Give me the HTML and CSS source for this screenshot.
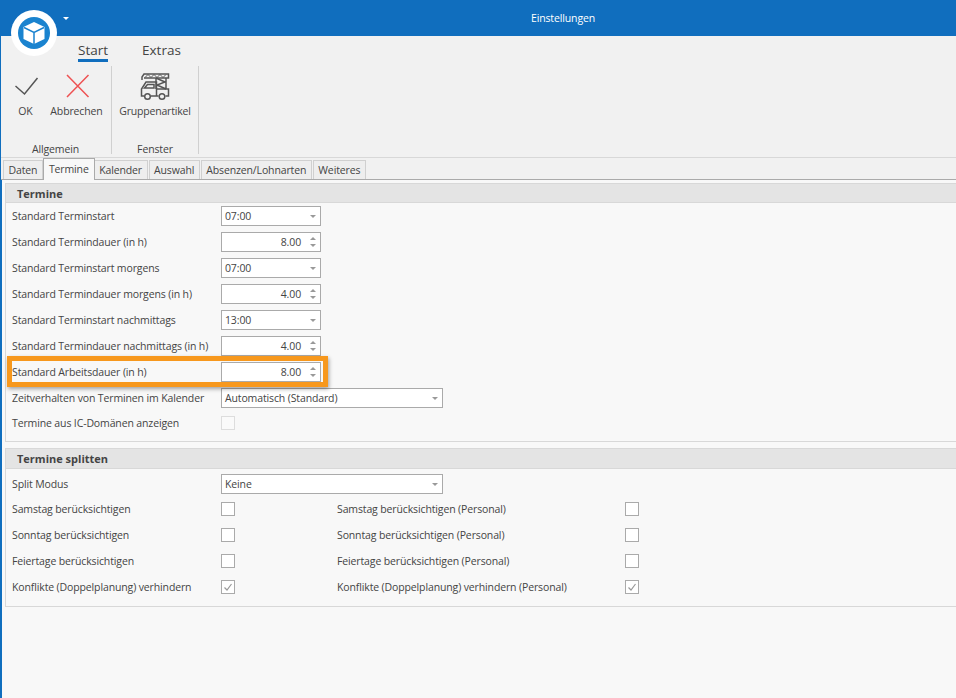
FILE: index.html
```html
<!DOCTYPE html>
<html lang="de">
<head>
    <meta charset="UTF-8">
    <title>Einstellungen</title>
    <link rel="stylesheet" href="styles.css">
</head>
<body>
    <div class="window">
        <div class="titlebar">
            <span class="title">Einstellungen</span>
        </div>
        <div class="logo">
            <svg width="34" height="34" viewBox="0 0 34 34">
                <circle cx="17" cy="17" r="16" fill="#1a83cf"/>
                <path d="M17 6 L27.5 11 V23 L17 28 L6.5 23 V11 Z" fill="#fff"/>
                <path d="M7 11.5 L17 16.5 L27 11.5 M17 16.5 V28" fill="none" stroke="#1a83cf" stroke-width="1.5"/>
            </svg>
        </div>
        <div class="qat-arrow"></div>

        <div class="ribbon">
            <div class="ribbon-tabs">
                <span class="ribbon-tab active">Start</span>
                <span class="ribbon-tab">Extras</span>
            </div>
            <div class="ribbon-groups">
                <div class="group group-allgemein">
                    <div class="group-items">
                        <div class="rbtn rbtn-ok">
                            <svg width="30" height="30" viewBox="0 0 30 30"><path d="M4.5 14 L13.5 22 L26.5 6" fill="none" stroke="#555" stroke-width="1.5"/></svg>
                            <span>OK</span>
                        </div>
                        <div class="rbtn rbtn-cancel">
                            <svg width="30" height="30" viewBox="0 0 30 30"><path d="M5 3 L26.5 25 M26.5 3 L5 25" fill="none" stroke="#ee5253" stroke-width="1.5"/></svg>
                            <span>Abbrechen</span>
                        </div>
                    </div>
                    <div class="group-name">Allgemein</div>
                </div>
                <div class="group group-fenster">
                    <div class="group-items">
                        <div class="rbtn rbtn-group">
                            <svg width="30" height="30" viewBox="0 0 30 30" fill="none" stroke="#555" stroke-width="1.5">
                                <path d="M2 8 V5 L4 2 H28.5 V6 H4"/>
                                <path d="M5 5.5 L8 2.5 L11 5.5 L14 2.5 L17 5.5 L20 2.5 L23 5.5 L26 2.5" stroke-width="1"/>
                                <path d="M16 6 V17 M26 6 V17 M16 6 L25 10 L17 13 L26 17"/>
                                <path d="M4 24 H1.5 V17 L6 10 H16.5 V24 H11 M16.5 17 H28.5 V24 H25.5 M16.5 24 H18.5"/>
                                <path d="M4.5 16 L7.5 12.5 H14 V16 Z"/>
                                <circle cx="7.5" cy="24.5" r="2.8"/>
                                <circle cx="22" cy="24.5" r="2.8"/>
                            </svg>
                            <span>Gruppenartikel</span>
                        </div>
                    </div>
                    <div class="group-name">Fenster</div>
                </div>
            </div>
        </div>

        <div class="tabs">
            <span class="tab">Daten</span>
            <span class="tab active">Termine</span>
            <span class="tab">Kalender</span>
            <span class="tab">Auswahl</span>
            <span class="tab">Absenzen/Lohnarten</span>
            <span class="tab">Weiteres</span>
        </div>

        <div class="content">
            <section class="panel panel-termine">
                <h2 class="panel-head">Termine</h2>
                <div class="rows">
                    <div class="row"><label>Standard Terminstart</label><div class="field short combo">07:00<i class="drop"></i></div></div>
                    <div class="row"><label>Standard Termindauer (in h)</label><div class="field short spin">8.00<i class="spins"></i></div></div>
                    <div class="row"><label>Standard Terminstart morgens</label><div class="field short combo">07:00<i class="drop"></i></div></div>
                    <div class="row"><label>Standard Termindauer morgens (in h)</label><div class="field short spin">4.00<i class="spins"></i></div></div>
                    <div class="row"><label>Standard Terminstart nachmittags</label><div class="field short combo">13:00<i class="drop"></i></div></div>
                    <div class="row"><label>Standard Termindauer nachmittags (in h)</label><div class="field short spin">4.00<i class="spins"></i></div></div>
                    <div class="row"><label>Standard Arbeitsdauer (in h)</label><div class="field short spin">8.00<i class="spins"></i></div></div>
                    <div class="row"><label>Zeitverhalten von Terminen im Kalender</label><div class="field long combo">Automatisch (Standard)<i class="drop"></i></div></div>
                    <div class="row row-last"><label>Termine aus IC-Domänen anzeigen</label><div class="check faint"></div></div>
                </div>
                <div class="highlight"></div>
            </section>

            <section class="panel panel-split">
                <h2 class="panel-head">Termine splitten</h2>
                <div class="rows">
                    <div class="row row-mode"><label>Split Modus</label><div class="field long combo">Keine<i class="drop"></i></div></div>
                    <div class="row"><label>Samstag berücksichtigen</label><div class="check"></div><label class="second">Samstag berücksichtigen (Personal)</label><div class="check"></div></div>
                    <div class="row"><label>Sonntag berücksichtigen</label><div class="check"></div><label class="second">Sonntag berücksichtigen (Personal)</label><div class="check"></div></div>
                    <div class="row"><label>Feiertage berücksichtigen</label><div class="check"></div><label class="second">Feiertage berücksichtigen (Personal)</label><div class="check"></div></div>
                    <div class="row"><label>Konflikte (Doppelplanung) verhindern</label><div class="check"><svg width="12" height="12" viewBox="0 0 12 12"><path d="M2.5 6.5 L5 9 L9.5 3" fill="none" stroke="#999" stroke-width="1.2"/></svg></div><label class="second">Konflikte (Doppelplanung) verhindern (Personal)</label><div class="check"><svg width="12" height="12" viewBox="0 0 12 12"><path d="M2.5 6.5 L5 9 L9.5 3" fill="none" stroke="#999" stroke-width="1.2"/></svg></div></div>
                </div>
            </section>
        </div>
    </div>
</body>
</html>
```
FILE: styles.css
```css
* {
    box-sizing: border-box;
}
html, body {
    margin: 0;
    height: 100%;
}
body {
    font-family: "Open Sans", "Liberation Sans", sans-serif;
    font-size: 10.5px;
    letter-spacing: -0.13px;
    color: #444;
    overflow: hidden;
}
.window {
    position: relative;
    height: 698px;
    background-color: #f1f1f1;
    border-left: 1px solid #106ebe;
    display: flex;
    flex-direction: column;
}
.titlebar {
    height: 36px;
    margin-left: -1px;
    padding-left: 170px;
    background-color: #106ebe;
    color: #fff;
    text-align: center;
    line-height: 36px;
}
.logo {
    position: absolute;
    left: 10px;
    top: 10px;
    width: 46px;
    height: 46px;
    border-radius: 50%;
    background-color: #fff;
    display: flex;
    align-items: center;
    justify-content: center;
}
.qat-arrow {
    position: absolute;
    left: 62px;
    top: 17px;
    border-left: 3px solid transparent;
    border-right: 3px solid transparent;
    border-top: 3px solid #fff;
}

.ribbon {
    height: 122px;
    padding-left: 1px;
    display: flex;
    flex-direction: column;
    border-bottom: 1px solid #d8d8d8;
}
.ribbon-tabs {
    height: 30px;
    padding: 5px 0 0 76px;
    display: flex;
    gap: 34px;
    font-size: 13.5px;
    letter-spacing: 0;
    line-height: 18px;
}
.ribbon-tab {
    height: 21px;
}
.ribbon-tab.active {
    border-bottom: 3px solid #106ebe;
}
.ribbon-groups {
    display: flex;
    height: 88px;
}
.group {
    display: flex;
    flex-direction: column;
    border-right: 1px solid #d0d0d0;
}
.group-allgemein {
    width: 110px;
}
.group-fenster {
    width: 87px;
}
.group-items {
    flex: 1;
    display: flex;
}
.group-name {
    height: 24px;
    padding-top: 12px;
    line-height: 14px;
    text-align: center;
}
.group-allgemein .group-name {
    padding-right: 2px;
}
.rbtn {
    flex: 1;
    display: flex;
    flex-direction: column;
    align-items: center;
    gap: 2px;
    padding-top: 6px;
    line-height: 14px;
}
.rbtn-ok {
    flex: 0 0 47px;
}
.rbtn-cancel {
    flex: 0 0 55px;
}
.rbtn-group {
    letter-spacing: -0.2px;
}

.tabs {
    height: 22px;
    display: flex;
    align-items: flex-end;
    gap: 1px;
    padding-left: 2px;
    border-bottom: 1px solid #aaa;
}
.tab {
    height: 19px;
    line-height: 18px;
    padding: 0 4.5px;
    background-color: #eee;
    border: 1px solid #d0d0d0;
    border-bottom: none;
}
.tab.active {
    height: 22px;
    padding: 0 5px;
    line-height: 20px;
    background-color: #f8f8f8;
    border-color: #aaa;
    margin: 0 -2px -1px -1px;
    position: relative;
}

.content {
    flex: 1;
    background-color: #f8f8f8;
    border-left: 1px solid #106ebe;
    padding: 3px 0 0 3px;
}
.panel {
    position: relative;
    border: 1px solid #d8d8d8;
    border-right: none;
    margin-bottom: 6px;
}
.panel-head {
    margin: 0;
    height: 20px;
    line-height: 19px;
    padding-left: 11px;
    background-color: #e4e4e4;
    font-size: 11px;
    font-weight: bold;
    letter-spacing: 0;
    border-bottom: 1px solid #d8d8d8;
}
.panel-termine .panel-head {
    height: 19px;
}
.rows {
    padding: 0 0 6px 6px;
}
.panel-split .rows {
    padding: 2px 0 6px 6px;
}
.row {
    height: 26px;
    display: flex;
    align-items: center;
}
.row-mode {
    height: 25px;
}
.row-last {
    height: 24px;
}
.row label {
    width: 209px;
}
.row label.second {
    width: 288px;
    margin-left: 102px;
}
.field {
    height: 20px;
    background-color: #fff;
    border: 1px solid #aaa;
    line-height: 18px;
    padding: 0 3px;
    position: relative;
}
.short {
    width: 100px;
}
.long {
    width: 222px;
}
.spin {
    text-align: right;
    padding-right: 19px;
}
.drop {
    position: absolute;
    right: 4px;
    top: 8px;
    border-left: 3px solid transparent;
    border-right: 3px solid transparent;
    border-top: 3px solid #999;
}
.spins::before,
.spins::after {
    content: "";
    position: absolute;
    right: 4px;
    border-left: 3px solid transparent;
    border-right: 3px solid transparent;
}
.spins::before {
    top: 4px;
    border-bottom: 3px solid #999;
}
.spins::after {
    bottom: 4px;
    border-top: 3px solid #999;
}
.check {
    width: 14px;
    height: 14px;
    background-color: #fff;
    border: 1px solid #aaa;
    display: flex;
    align-items: center;
    justify-content: center;
}
.check.faint {
    border-color: #ddd;
    background-color: #fafafa;
}
.highlight {
    position: absolute;
    left: 1px;
    top: 172px;
    width: 321px;
    height: 31px;
    border: 5px solid #f7981d;
    box-shadow: 1px 2px 4px rgba(0, 0, 0, 0.35);
}
```
